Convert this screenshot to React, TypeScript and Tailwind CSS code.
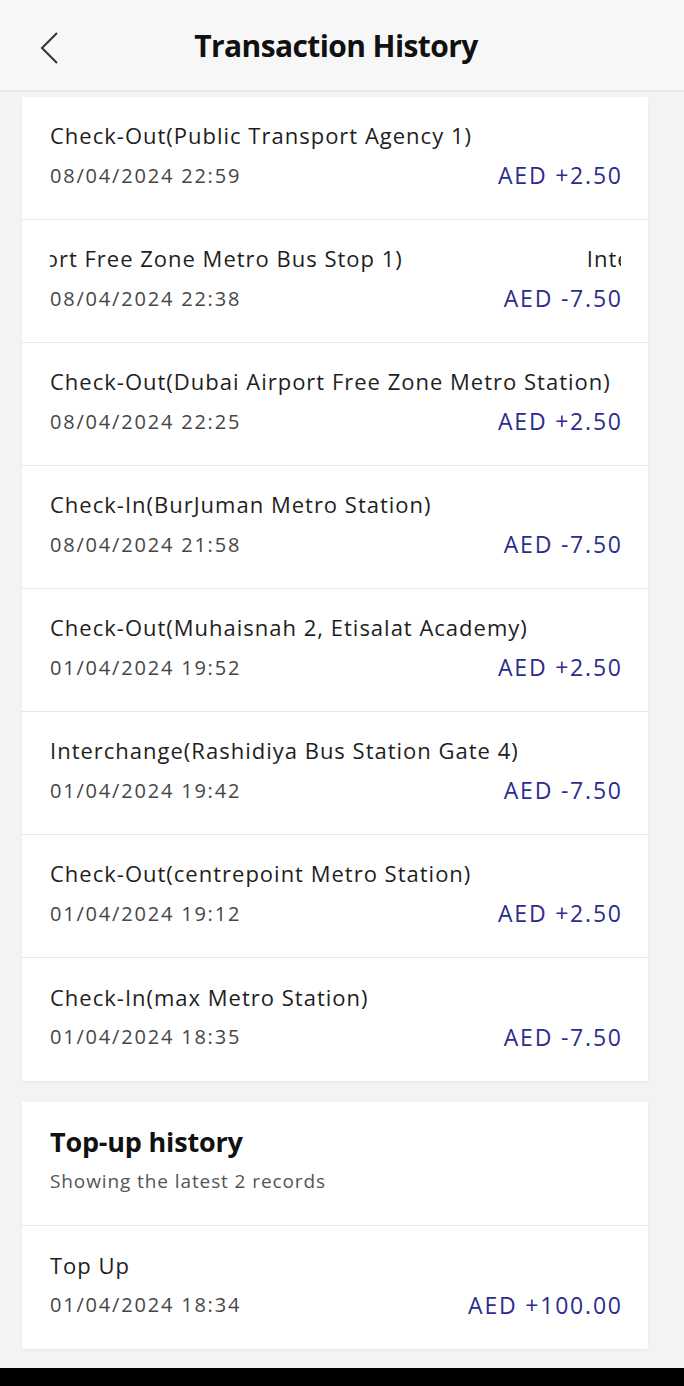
import React from "react";

const rows = [
  { t: "Check-Out(Public Transport Agency 1)", d: "08/04/2024 22:59", a: "AED +2.50" },
  { t: "marquee", d: "08/04/2024 22:38", a: "AED -7.50" },
  { t: "Check-Out(Dubai Airport Free Zone Metro Station)", d: "08/04/2024 22:25", a: "AED +2.50" },
  { t: "Check-In(BurJuman Metro Station)", d: "08/04/2024 21:58", a: "AED -7.50" },
  { t: "Check-Out(Muhaisnah 2, Etisalat Academy)", d: "01/04/2024 19:52", a: "AED +2.50" },
  { t: "Interchange(Rashidiya Bus Station Gate 4)", d: "01/04/2024 19:42", a: "AED -7.50" },
  { t: "Check-Out(centrepoint Metro Station)", d: "01/04/2024 19:12", a: "AED +2.50" },
  { t: "Check-In(max Metro Station)", d: "01/04/2024 18:35", a: "AED -7.50" },
];

function Row({ t, d, a, last }: { t: string; d: string; a: string; last?: boolean }) {
  return (
    <div className={`h-[123px] pl-[28px] pr-[27px] flex flex-col justify-center ${last ? "" : "border-b border-[#e6e6e6]"}`}>
      {t === "marquee" ? (
        <div className="overflow-hidden whitespace-nowrap text-[22px] leading-[30px] tracking-[1px] text-[#1e1e1e] mt-[-3px]">
          <div className="flex ml-[-265px]">
            <span>Interchange(Dubai Airport Free Zone Metro Bus Stop 1)</span>
            <span className="ml-[184px]">Interchange(Dubai Airport Free Zone Metro Bus Stop 1)</span>
          </div>
        </div>
      ) : (
        <div className="text-[22px] leading-[30px] tracking-[1px] text-[#1e1e1e] whitespace-nowrap mt-[-3px]">{t}</div>
      )}
      <div className="flex items-center justify-between mt-[8px]">
        <span className="text-[20px] text-[#464646] tracking-[1.8px]">{d}</span>
        <span className="text-[23px] text-[#2b2d8e] tracking-[1.8px] mr-[-1.8px]">{a}</span>
      </div>
    </div>
  );
}

export default function App() {
  return (
    <div
      className="w-[684px] h-[1386px] bg-[#f3f3f3] flex flex-col overflow-hidden"
      style={{ fontFamily: '"Open Sans", "Noto Sans", sans-serif' }}
    >
      <div className="h-[92px] shrink-0 bg-[#f7f7f7] border-b-2 border-[#e8e8e8] flex items-center relative">
        <svg className="absolute left-[38px] top-[31px]" width="24" height="34" viewBox="0 0 24 34">
          <path d="M19 2 L4 17 L19 32" fill="none" stroke="#333" strokeWidth="2" />
        </svg>
        <div className="w-full text-center text-[30px] font-bold text-[#111] tracking-[-0.6px] pr-[12px]">
          Transaction History
        </div>
      </div>
      <div className="pl-[22px] pt-[5px] flex flex-col gap-[21px] w-[648px]">
        <div className="bg-white shadow-[0_1px_2px_rgba(0,0,0,0.06)]">
          {rows.map((r, i) => (
            <Row key={i} {...r} last={i === rows.length - 1} />
          ))}
        </div>
        <div className="bg-white shadow-[0_1px_2px_rgba(0,0,0,0.06)]">
          <div className="h-[124px] px-[28px] flex flex-col justify-center border-b border-[#e6e6e6]">
            <div className="text-[27px] font-bold text-[#111] tracking-[-0.2px] leading-[34px] mt-[-6px]">Top-up history</div>
            <div className="text-[19px] text-[#555] tracking-[0.9px] mt-[8px]">Showing the latest 2 records</div>
          </div>
          <Row t="Top Up" d="01/04/2024 18:34" a="AED +100.00" last />
        </div>
      </div>
      <div className="flex-1" />
      <div className="h-[18px] bg-black shrink-0" />
    </div>
  );
}
